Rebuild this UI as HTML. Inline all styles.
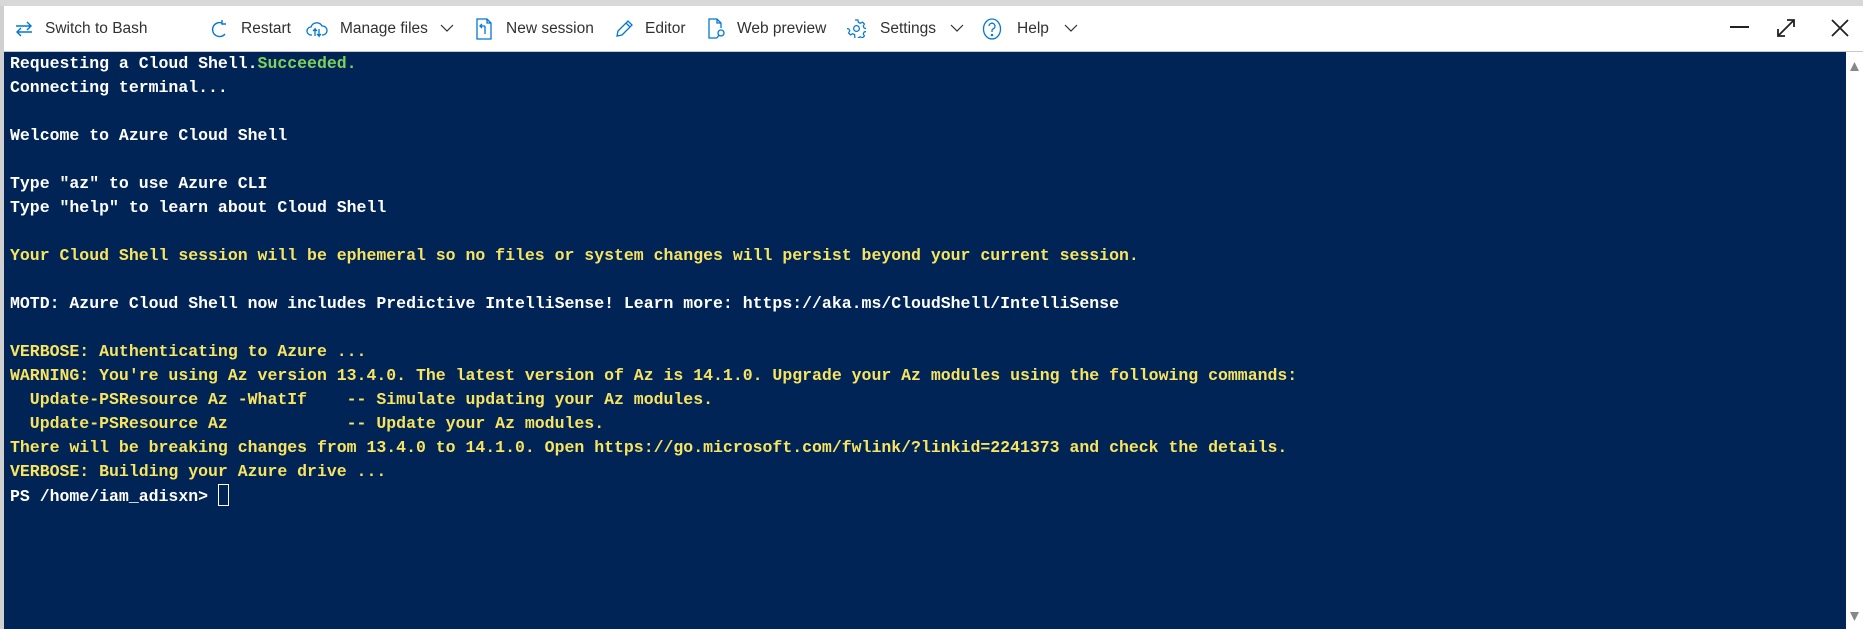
<!DOCTYPE html>
<html><head><meta charset="utf-8"><style>
html,body{margin:0;padding:0;width:1863px;height:629px;overflow:hidden;background:#fff;}
.top{position:absolute;left:0;top:0;width:1863px;height:6px;background:#d8d8d8;}
.lb{position:absolute;left:0;top:6px;width:4px;height:623px;background:#d0d0d0;}
.tb{position:absolute;left:4px;top:6px;width:1859px;height:45px;background:#fff;border-bottom:1px solid #c8c8c8;font-family:"Liberation Sans",sans-serif;font-size:15.5px;color:#323130;}
.it{position:absolute;top:0;height:45px;line-height:45px;white-space:nowrap;}
.ic{position:absolute;top:14px;}
.term{position:absolute;left:4px;top:52px;width:1842px;height:577px;background:#012456;}
pre{margin:0;padding:0 0 0 6px;font-family:"Liberation Mono",monospace;font-weight:bold;font-size:16.5px;line-height:24px;color:#fff;letter-spacing:0;}
.y{color:#f8e45e;}.g{color:#7ed35b;}
.sb{position:absolute;left:1846px;top:52px;width:17px;height:577px;background:#fff;}
</style></head><body>
<div class="top"></div><div class="lb"></div>
<div class="tb">
 <svg class="ic" style="left:10px" width="20" height="18" viewBox="0 0 20 18" fill="none" stroke="#0078d4" stroke-width="1.4"><path d="M2 6h15M13 2l4 4-4 4M18 12H3M7 8l-4 4 4 4"/></svg>
 <div class="it" style="left:41px">Switch to Bash</div>
 <svg class="ic" style="left:206px" width="18" height="20" viewBox="0 0 18 20" fill="none" stroke="#0078d4" stroke-width="1.4"><path d="M12 3A7 7 0 1 0 15 14M12 0v4h4"/></svg>
 <div class="it" style="left:237px">Restart</div>
 <svg class="ic" style="left:302px" width="22" height="18" viewBox="0 0 22 18" fill="none" stroke="#0078d4" stroke-width="1.3"><path d="M6 15H5a4 4 0 0 1 0-8 6 6 0 0 1 11-1 4.5 4.5 0 0 1 1 9h-1M9 16V9l-2 2M9 9l2 2M13 9v7l-2-2M13 16l2-2"/></svg>
 <div class="it" style="left:336px">Manage files</div>
 <svg class="ic" style="left:366px;top:18px;margin-left:70px" width="14" height="9" viewBox="0 0 14 9" fill="none" stroke="#323130" stroke-width="1.2"><path d="M1 1l6 6 6-6"/></svg>
 <svg class="ic" style="left:472px;top:12px" width="16" height="22" viewBox="0 0 16 22" fill="none" stroke="#0078d4" stroke-width="1.3"><path d="M1 1h10l4 4v16H1zM11 1v4h4M9 8h-5M6 6L4 8l2 2M9 8v8"/></svg>
 <div class="it" style="left:502px">New session</div>
 <svg class="ic" style="left:611px" width="18" height="18" viewBox="0 0 18 18" fill="none" stroke="#0078d4" stroke-width="1.3"><path d="M2 16l1-5L13 1l4 4L7 15zM11 3l4 4"/></svg>
 <div class="it" style="left:641px">Editor</div>
 <svg class="ic" style="left:704px;top:12px" width="18" height="22" viewBox="0 0 18 22" fill="none" stroke="#0078d4" stroke-width="1.3"><path d="M9 20H1V1h8l4 4v5M9 1v4h4"/><circle cx="13" cy="15" r="3"/><path d="M11 17l-2 3"/></svg>
 <div class="it" style="left:733px">Web preview</div>
 <svg class="ic" style="left:843px;top:13px" width="19" height="19" viewBox="0 0 20 20" fill="none" stroke="#0078d4" stroke-width="1.3"><circle cx="10" cy="10" r="3"/><path d="M8.5 1h3l.5 2.5 2 1 2.3-1.2 2 2-1.2 2.3 1 2 2.5.5v3l-2.5.5-1 2 1.2 2.3-2 2-2.3-1.2-2 1-.5 2.5h-3L8 16.5l-2-1-2.3 1.2-2-2L2.9 12.4l-1-2L-.5 10"/></svg>
 <div class="it" style="left:876px">Settings</div>
 <svg class="ic" style="left:946px;top:18px" width="14" height="9" viewBox="0 0 14 9" fill="none" stroke="#323130" stroke-width="1.2"><path d="M1 1l6 6 6-6"/></svg>
 <svg class="ic" style="left:978px;top:12px" width="20" height="22" viewBox="0 0 20 22" fill="none" stroke="#0078d4" stroke-width="1.3"><ellipse cx="10" cy="11" rx="8.5" ry="10"/><path d="M7 8a3 3 0 1 1 4 3c-1 .5-1 1-1 3"/><circle cx="10" cy="17" r=".6" fill="#0078d4"/></svg>
 <div class="it" style="left:1013px">Help</div>
 <svg class="ic" style="left:1060px;top:18px" width="14" height="9" viewBox="0 0 14 9" fill="none" stroke="#323130" stroke-width="1.2"><path d="M1 1l6 6 6-6"/></svg>
 <svg class="ic" style="left:1726px;top:20px" width="19" height="3"><rect width="19" height="2" fill="#222"/></svg>
 <svg class="ic" style="left:1772px;top:12px" width="20" height="20" viewBox="0 0 20 20" fill="none" stroke="#222" stroke-width="1.8"><path d="M2 18L18 2M11 2h7v7M2 11v7h7"/></svg>
 <svg class="ic" style="left:1826px;top:12px" width="20" height="20" viewBox="0 0 20 20" fill="none" stroke="#222" stroke-width="1.8"><path d="M2 2l16 16M18 2L2 18"/></svg>
</div>
<div class="term"><pre>Requesting a Cloud Shell.<span class="g">Succeeded.</span>
Connecting terminal...

Welcome to Azure Cloud Shell

Type "az" to use Azure CLI
Type "help" to learn about Cloud Shell

<span class="y">Your Cloud Shell session will be ephemeral so no files or system changes will persist beyond your current session.</span>

MOTD: Azure Cloud Shell now includes Predictive IntelliSense! Learn more: https://aka.ms/CloudShell/IntelliSense

<span class="y">VERBOSE: Authenticating to Azure ...
WARNING: You're using Az version 13.4.0. The latest version of Az is 14.1.0. Upgrade your Az modules using the following commands:
  Update-PSResource Az -WhatIf    -- Simulate updating your Az modules.
  Update-PSResource Az            -- Update your Az modules.
There will be breaking changes from 13.4.0 to 14.1.0. Open https://go.microsoft.com/fwlink/?linkid=2241373 and check the details.
VERBOSE: Building your Azure drive ...</span>
PS /home/iam_adisxn&gt; <span style="display:inline-block;width:9px;height:20px;border:1px solid #fff;vertical-align:-5px"></span></pre></div>
<div class="sb">
 <svg style="position:absolute;left:4px;top:10px" width="9" height="9"><path d="M4.5 0L9 9H0z" fill="#888"/></svg>
 <svg style="position:absolute;left:4px;top:560px" width="9" height="9"><path d="M0 0h9L4.5 9z" fill="#888"/></svg>
</div>
</body></html>
